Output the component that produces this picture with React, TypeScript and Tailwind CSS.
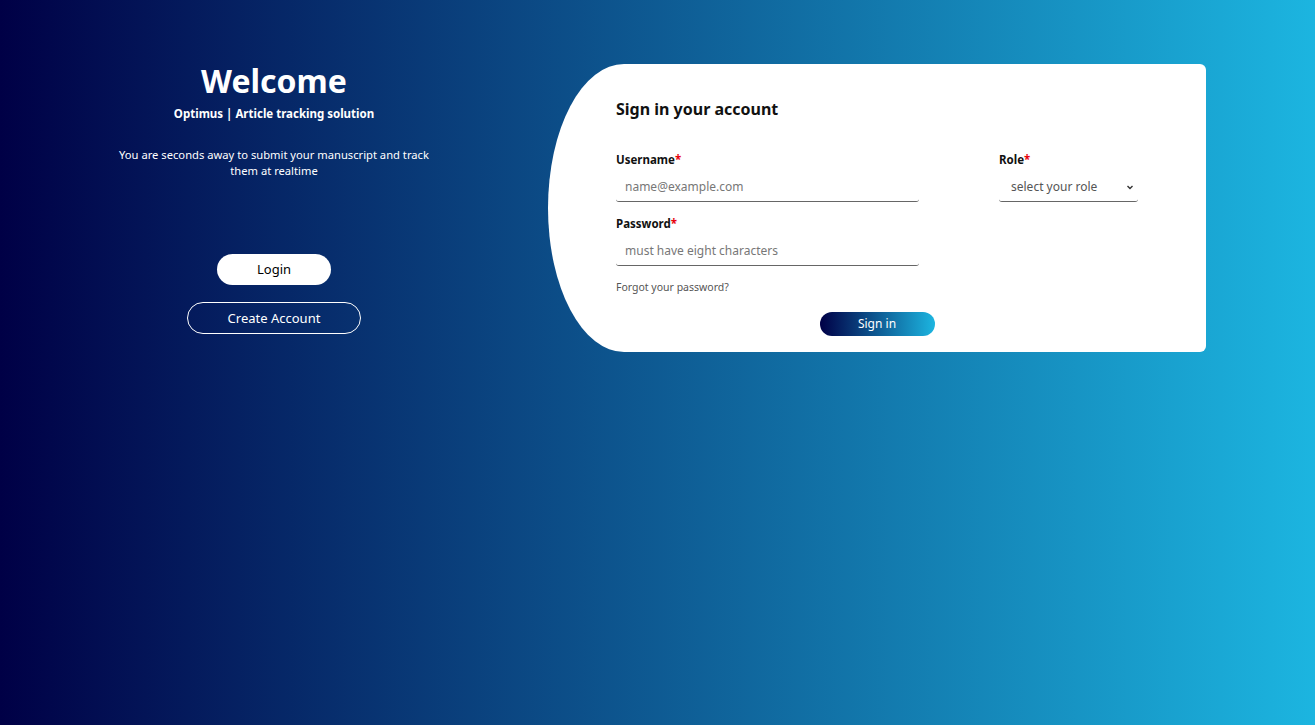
import React from "react";

export default function App() {
  return (
    <div
      className="w-[1315px] h-[725px] bg-[linear-gradient(to_right,#000046,#1CB5E0)] flex items-start pt-[64px]"
      style={{ fontFamily: '"Noto Sans", "Open Sans", sans-serif' }}
    >
      <div className="w-[548px] flex flex-col items-center text-white">
        <h1 className="text-[32px] leading-[32px] font-bold mt-[1px]">Welcome</h1>
        <p className="text-[11.5px] font-bold mt-[8px]">Optimus | Article tracking solution</p>
        <p className="text-[11.2px] leading-[16px] text-center w-[320px] mt-[25px]">
          You are seconds away to submit your manuscript and track them at realtime
        </p>
        <button className="mt-[75px] w-[114px] h-[31px] rounded-full bg-white text-black text-[13px]">
          Login
        </button>
        <button className="mt-[17px] w-[174px] h-[32px] rounded-full border border-white text-white text-[13px]">
          Create Account
        </button>
      </div>
      <div className="w-[658px] h-[288px] bg-white rounded-tl-[76px_144px] rounded-bl-[76px_144px] rounded-r-[6px] pl-[68px] pt-[35px] text-[#111]">
        <h2 className="text-[16px] font-bold leading-[20px]">Sign in your account</h2>
        <div className="flex mt-[34px]">
          <div className="w-[303px]">
            <label className="block text-[11.5px] font-bold leading-[14px]">
              Username<span className="text-red-600">*</span>
            </label>
            <div className="mt-[6px] h-[29px] border-b border-[#666] rounded-[3px] pl-[9px] flex items-center text-[12px] text-[#777]">
              name@example.com
            </div>
          </div>
          <div className="ml-[80px] w-[139px]">
            <label className="block text-[11.5px] font-bold leading-[14px]">
              Role<span className="text-red-600">*</span>
            </label>
            <div className="mt-[6px] h-[29px] border-b border-[#666] rounded-[3px] pl-[12px] pr-[3px] flex items-center justify-between text-[12px] text-[#555]">
              <span>select your role</span>
              <svg width="10" height="10" viewBox="0 0 10 10" fill="none" stroke="#333" strokeWidth="1.4">
                <path d="M2.5 4 L5 6.5 L7.5 4" />
              </svg>
            </div>
          </div>
        </div>
        <div className="w-[303px] mt-[15px]">
          <label className="block text-[11.5px] font-bold leading-[14px]">
            Password<span className="text-red-600">*</span>
          </label>
          <div className="mt-[6px] h-[29px] border-b border-[#666] rounded-[3px] pl-[9px] flex items-center text-[12px] text-[#777]">
            must have eight characters
          </div>
        </div>
        <p className="mt-[14px] text-[10.5px] text-[#555] leading-[14px]">Forgot your password?</p>
        <div className="w-[522px] flex justify-center mt-[18px]">
          <button className="w-[115px] h-[24px] rounded-full bg-[linear-gradient(to_right,#000046,#1CB5E0)] text-white text-[12px]">
            Sign in
          </button>
        </div>
      </div>
    </div>
  );
}
